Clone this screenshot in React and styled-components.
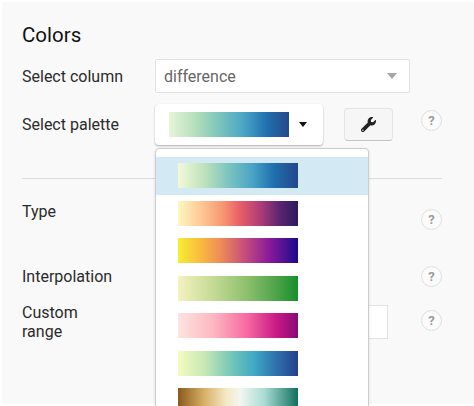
import React from "react";
import styled, { createGlobalStyle } from "styled-components";
import { FaWrench } from "react-icons/fa";

const Global = createGlobalStyle`
  html, body { margin: 0; padding: 0; background: #fff; }
  body { width: 474px; height: 406px; overflow: hidden; font-family: Roboto, "Liberation Sans", sans-serif; }
  * { box-sizing: border-box; }
`;

const Panel = styled.div`
  position: relative;
  margin: 2px 0 0 2px;
  width: 472px;
  height: 402px;
  padding: 20px 32px 0 20px;
  background: #f9f9f9;
  color: #2b2b2b;
`;

const Title = styled.h2`
  margin: 0;
  height: 37px;
  font-size: 20.5px;
  line-height: 26px;
  font-weight: 400;
  color: #111;
`;

const Row = styled.div`
  display: flex;
  align-items: ${(p) => p.$align || "center"};
  height: ${(p) => p.$h}px;
  margin-top: ${(p) => p.$mt || 0}px;
`;

const Label = styled.label`
  width: 133px;
  flex: none;
  font-size: 16px;
  line-height: 19px;
`;

const SelectBox = styled.div`
  display: flex;
  align-items: center;
  justify-content: space-between;
  width: 255px;
  height: 34px;
  padding: 0 12px 0 8px;
  background: #fff;
  border: 1px solid #e2e2e2;
  border-radius: 2px;
  font-size: 16px;
  color: #666;
`;

const Caret = styled.span`
  width: 0;
  height: 0;
  border-left: ${(p) => p.$w}px solid transparent;
  border-right: ${(p) => p.$w}px solid transparent;
  border-top: ${(p) => p.$h}px solid ${(p) => p.$color};
`;

const PaletteButton = styled.div`
  display: flex;
  align-items: center;
  width: 168px;
  height: 41px;
  padding-left: 14px;
  background: #fff;
  border-radius: 4px;
  box-shadow: 0 1px 2px rgba(0, 0, 0, 0.3);
`;

const Swatch = styled.div`
  flex: none;
  width: 120px;
  height: 25px;
  background: linear-gradient(to right, ${(p) => p.$stops});
`;

const PaletteCaret = styled.span`
  margin-left: 10px;
  display: flex;
`;

const ToolButton = styled.button`
  display: flex;
  align-items: center;
  justify-content: center;
  width: 49px;
  height: 33px;
  margin-left: 21px;
  padding: 0;
  background: #f6f6f6;
  border: 1px solid #e4e4e4;
  border-bottom: 1px solid #c4c4c4;
  border-radius: 4px;
  color: #222;
`;

const Help = styled.span`
  display: flex;
  align-items: center;
  justify-content: center;
  flex: none;
  width: 21px;
  height: 21px;
  margin-left: auto;
  margin-top: ${(p) => p.$top || 0}px;
  margin-bottom: ${(p) => p.$bottom || 0}px;
  border: 1px solid #dedede;
  border-radius: 50%;
  background: #fbfbfb;
  font-size: 13px;
  font-weight: 700;
  color: #9c9c9c;
`;

const Divider = styled.hr`
  margin: 33px 0 0;
  border: 0;
  border-top: 1px solid #dcdcdc;
`;

const RadioColumn = styled.div`
  display: flex;
  flex-direction: column;
  gap: 15px;
  margin-top: 1px;
`;

const Radio = styled.span`
  display: block;
  width: 10px;
  height: 10px;
  border-radius: 50%;
  background: ${(p) => (p.$on ? "#2f9aa8" : "#c9c9c9")};
`;

const TextInput = styled.div`
  width: 233px;
  height: 34px;
  background: #fff;
  border: 1px solid #e2e2e2;
`;

const Menu = styled.ul`
  position: absolute;
  left: 153px;
  top: 146px;
  width: 214px;
  height: 270px;
  margin: 0;
  padding: 8px 0 0;
  list-style: none;
  background: #fff;
  border: 1px solid #cdcdcd;
  border-radius: 4px;
  box-shadow: 0 1px 3px rgba(0, 0, 0, 0.12);
`;

const MenuItem = styled.li`
  display: flex;
  align-items: center;
  height: 37.5px;
  padding-left: 22px;
  background: ${(p) => (p.$active ? "#d3e9f4" : "transparent")};
`;

const palettes = [
  "#f3f9d8, #bde2bc 22%, #7cc5bf 42%, #4aa3c6 62%, #1f6fae 80%, #24468a",
  "#fdf6c0, #fdc793 20%, #f79470 38%, #e85d67 52%, #a83a78 70%, #5a2470 85%, #2c1a5c",
  "#f6ee32, #f8bd3c 18%, #ee8a58 36%, #c84f7a 55%, #8a1a9a 76%, #1a0a8c",
  "#f4f2bf, #c3da94 30%, #8cbf6c 58%, #4ea34a 82%, #15902a",
  "#ffe4e0, #fcb6c0 30%, #f668a0 58%, #c81a84 82%, #860a78",
  "#f5fbc0, #c8e8b4 22%, #72c6b8 45%, #3ea8c4 64%, #2f70ac 82%, #24408c",
  "#8a5a1c, #d8b068 22%, #f4e8c4 40%, #f2f6f0 52%, #a8dcd4 72%, #10705e",
];

const main = "#e6f5d8, #b5dfbb 22%, #7cc4bc 42%, #4aa5c6 62%, #1f6fae 82%, #24488a";

export default function App() {
  return (
    <>
      <Global />
      <Panel>
        <Title>Colors</Title>
        <Row $h={34}>
          <Label>Select column</Label>
          <SelectBox>
            difference
            <Caret $w={5} $h={6} $color="#a6a6a6" />
          </SelectBox>
        </Row>
        <Row $h={41} $mt={11}>
          <Label>Select palette</Label>
          <PaletteButton>
            <Swatch $stops={main} />
            <PaletteCaret>
              <Caret $w={4} $h={5} $color="#111" />
            </PaletteCaret>
          </PaletteButton>
          <ToolButton aria-label="Edit palette">
            <FaWrench size={15} />
          </ToolButton>
          <Help $bottom={8}>?</Help>
        </Row>
        <Divider />
        <Row $h={42} $mt={23} $align="flex-start">
          <Label>Type</Label>
          <RadioColumn>
            <Radio />
            <Radio $on />
          </RadioColumn>
          <Help $top={7}>?</Help>
        </Row>
        <Row $h={22} $mt={21}>
          <Label>Interpolation</Label>
          <Help>?</Help>
        </Row>
        <Row $h={38} $mt={16}>
          <Label>Custom<br />range</Label>
          <TextInput />
          <Help $bottom={4}>?</Help>
        </Row>
        <Menu>
          {palettes.map((p, i) => (
            <MenuItem key={p} $active={i === 0}>
              <Swatch $stops={p} />
            </MenuItem>
          ))}
        </Menu>
      </Panel>
    </>
  );
}
